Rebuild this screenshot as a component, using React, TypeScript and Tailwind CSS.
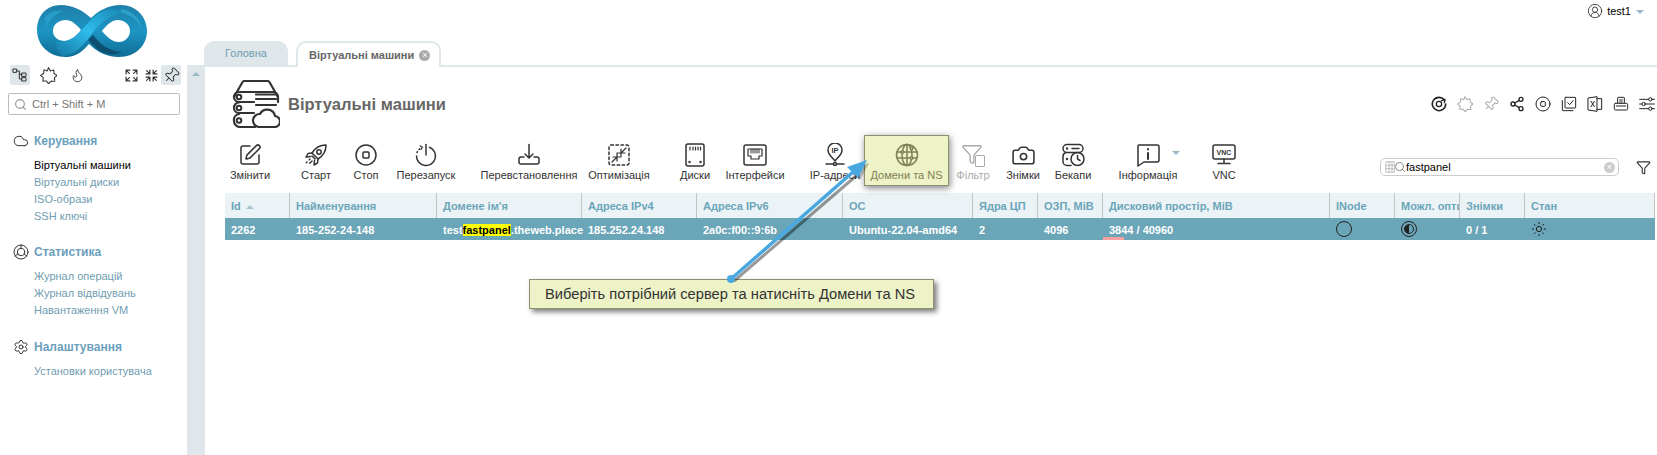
import React from 'react';
import {
  Camera,
  CircleUserRound,
  Cloud,
  Flame,
  Funnel,
  Pin,
  Search,
  Settings,
  Share2,
  SquarePen,
  Sun,
} from 'lucide-react';

const Svg: React.FC<{ className?: string; vb?: string; children: React.ReactNode }> = ({ className = 'w-6 h-6', vb = '0 0 24 24', children }) => (
  <svg viewBox={vb} className={className} fill="none" stroke="currentColor" strokeWidth={1.5} strokeLinecap="round" strokeLinejoin="round">
    {children}
  </svg>
);

const StarBadge: React.FC<{ className?: string }> = ({ className }) => (
  <Svg className={className}>
    <path d="M12 1l2.800 4.500 4.700-1.500.3 5 4.200 3-3.800 3.200.8 5-5-.2L12 23.500 8.900 19.700l-5 .3.8-5L1 12l4.200-3 .3-5 4.700 1.500z" strokeDasharray="2.400 1.300" strokeWidth={1.600} />
  </Svg>
);

const Logo = () => (
  <svg viewBox="0 0 111 52" className="w-[111px] h-[52px]" fill="none">
    <defs>
      <linearGradient id="lg" x1="0" y1="0" x2="0" y2="1">
        <stop offset="0" stopColor="#1f7fa8" />
        <stop offset="0.5" stopColor="#1d95c4" />
        <stop offset="1" stopColor="#0f6c94" />
      </linearGradient>
      <linearGradient id="band" x1="0" y1="1" x2="1" y2="0">
        <stop offset="0" stopColor="#1479a3" />
        <stop offset="0.5" stopColor="#2fbcec" />
        <stop offset="1" stopColor="#1a8ab6" />
      </linearGradient>
    </defs>
    <path
      fillRule="evenodd"
      fill="url(#lg)"
      d="M55 13C46 5 36 0 25 0C10 0 1 11 1 25C1 40 13 52 30 52C40 52 47 46 53 39C60 46 70 52 83 52C100 52 111 40 111 26C111 12 100 0 85 0C72 0 62 6 55 13ZM17 26C17 19 23 15 30 15C35 15 40 19 45 25C40 31 35 36 29 36C22 36 17 32 17 26ZM94 26C94 19 88 15 82 15C75 15 70 21 66 26C71 32 76 37 83 37C89 37 94 32 94 26Z"
    />
    <path d="M57 30C63 38 72 46 85 47C78 51 68 50 60 43C57 40 54 37 52 35Z" fill="#0d4f70" />
    <path d="M8 14C12 7 20 5 28 6C22 8 14 12 11 22C10 18 9 16 8 14Z" fill="#2aa5d4" opacity=".7" />
    <path d="M85 4C95 5 104 13 106 24C102 15 94 9 85 8Z" fill="#36b4e0" opacity=".6" />
    <path d="M26 51C36 51 44 44 52 34C59 24 68 12 86 8C82 3 72 3 63 8C55 13 47 24 41 30C36 34 28 38 20 36C20 42 22 48 26 51Z" fill="url(#band)" />
  </svg>
);

const toolbar = [
  { label: 'Змінити', cls: 'w-[50px]', icon: <SquarePen className="w-[24px] h-[24px]" strokeWidth={1.5} /> },
  {
    label: 'Старт',
    cls: 'w-[50px] ml-[16px]',
    icon: (
      <Svg>
        <path d="M22 2c-6 0-11 3-14 8l6 6c5-3 8-8 8-14z" />
        <circle cx="15" cy="9" r="2.200" />
        <path d="M8 10l-4 .5-2 3.500 4.500-.5M14 16l-.5 4-3.500 2 .5-4.500M8 13l3 3" />
        <path d="M6 16l-1 1M8 18l-3 3M3 19l-1 1" strokeDasharray="1 1.200" />
      </Svg>
    ),
  },
  {
    label: 'Стоп',
    cls: 'w-[40px] ml-[5px]',
    icon: (
      <Svg>
        <circle cx="12" cy="12" r="10" />
        <rect x="9" y="9" width="6" height="6" rx="1" />
      </Svg>
    ),
  },
  {
    label: 'Перезапуск',
    cls: 'w-[64px] ml-[8px]',
    icon: (
      <Svg>
        <path d="M12 1.500v10.500" />
        <path d="M15.500 4.200A9.500 9.500 0 1 1 2.500 13" />
        <path d="M3 9.500l.4-.9M5 6.500l.7-.7" />
        <path d="M6 2.800l2.500 1.400L7 6.500" strokeWidth={1.2} />
      </Svg>
    ),
  },
  {
    label: 'Перевстановлення',
    cls: 'w-[100px] ml-[21px]',
    icon: (
      <Svg>
        <path d="M12 1.500v13M8 11l4 4 4-4" />
        <path d="M7 14H4a2 2 0 0 0-2 2v3a2 2 0 0 0 2 2h16a2 2 0 0 0 2-2v-3a2 2 0 0 0-2-2h-3" />
      </Svg>
    ),
  },
  {
    label: 'Оптимізація',
    cls: 'w-[68px] ml-[6px]',
    icon: (
      <Svg>
        <rect x="2" y="2" width="20" height="20" rx="2" strokeDasharray="2.500 2.500" />
        <path d="M19 5l-4 4M14 6v4h4M5 19l4-4M10 18v-4H6" strokeWidth={1.2} />
        <rect x="10" y="10" width="4" height="4" strokeWidth={1.2} />
      </Svg>
    ),
  },
  {
    label: 'Диски',
    cls: 'w-[40px] ml-[22px]',
    icon: (
      <Svg>
        <rect x="3" y="1" width="18" height="22" rx="2" />
        <path d="M7 4v3M10 4v3M12.500 4v3M15 4v3M17.500 4v3" strokeWidth={1.2} />
        <circle cx="6.500" cy="19" r=".5" />
        <circle cx="17.500" cy="19" r=".5" />
      </Svg>
    ),
  },
  {
    label: 'Інтерфейси',
    cls: 'w-[64px] ml-[8px]',
    icon: (
      <Svg>
        <rect x="1" y="2" width="22" height="20" rx="2" />
        <path d="M5 6h14v7h-3v3H8v-3H5z" strokeWidth={1.2} />
        <path d="M8 6v4M10 6v4M12 6v4M14 6v4M16 6v4" strokeWidth={1} />
      </Svg>
    ),
  },
  {
    label: 'IP-адреси',
    cls: 'w-[56px] ml-[20px]',
    icon: (
      <Svg>
        <path d="M12 18c-3-4-7-6-7-11a7 7 0 0 1 14 0c0 5-4 7-7 11z" />
        <circle cx="12" cy="21" r="1.500" />
        <path d="M3 21h7M14 21h7" />
        <text x="12" y="10" fontSize="7.500" fontWeight="700" fill="currentColor" stroke="none" textAnchor="middle" fontFamily="Liberation Sans">IP</text>
      </Svg>
    ),
  },
];

const toolbarRight = [
  {
    label: 'Знімки',
    cls: 'w-[44px] ml-[8px]',
    icon: <Camera className="w-[25px] h-[25px]" strokeWidth={1.5} />,
  },
  {
    label: 'Бекапи',
    cls: 'w-[44px] ml-[6px]',
    icon: (
      <Svg>
        <rect x="2" y="1.500" width="20" height="8" rx="4" />
        <path d="M5 9.500a4 4 0 0 0-3 4v5a4 4 0 0 0 4 4h4" />
        <circle cx="6" cy="5.500" r=".5" />
        <path d="M11 5.500h7" />
        <circle cx="6" cy="16" r=".5" />
        <circle cx="16.500" cy="16" r="6.500" />
        <path d="M16.500 12.500V16l2.500 1.500" />
      </Svg>
    ),
  },
];

const columns = [
  { label: 'Id', cls: 'w-[65px]', sort: true },
  { label: 'Найменування', cls: 'w-[147px]' },
  { label: "Домене ім'я", cls: 'w-[145px]' },
  { label: 'Адреса IPv4', cls: 'w-[115px]' },
  { label: 'Адреса IPv6', cls: 'w-[146px]' },
  { label: 'ОС', cls: 'w-[130px]' },
  { label: 'Ядра ЦП', cls: 'w-[65px]' },
  { label: 'ОЗП, МіВ', cls: 'w-[65px]' },
  { label: 'Дисковий простір, МіВ', cls: 'w-[227px]' },
  { label: 'INode', cls: 'w-[65px]' },
  { label: 'Можл. оптимізації', cls: 'w-[65px]' },
  { label: 'Знімки', cls: 'w-[65px]' },
  { label: 'Стан', cls: 'w-[130px]' },
];

const topIcons = [
  <Svg key="a" className="w-4 h-4 text-[#222]">
    <path d="M20 6a10 10 0 1 0 2 6" strokeWidth={2.400} />
    <circle cx="12" cy="12" r="4" strokeWidth={2} />
    <path d="M16 7l5-2-1 5" strokeWidth={2} />
  </Svg>,
  <StarBadge key="b" className="w-4 h-4 text-[#aaa]" />,
  <Pin key="c" className="w-4 h-4 text-[#aaa] rotate-45" strokeWidth={1.5} />,
  <Share2 key="d" className="w-4 h-4 text-[#222]" strokeWidth={2} />,
  <Svg key="e" className="w-4 h-4 text-[#222]">
    <circle cx="12" cy="12" r="10.500" />
    <rect x="8.500" y="8.500" width="7" height="7" rx="1.500" />
  </Svg>,
  <Svg key="f" className="w-4 h-4 text-[#222]">
    <rect x="6" y="2" width="16" height="16" rx="1" />
    <path d="M10 10l3 3 5-6" />
    <path d="M2 7v14a1 1 0 0 0 1 1h15" />
  </Svg>,
  <Svg key="g" className="w-4 h-4 text-[#222]">
    <path d="M2 3l13-2v22L2 21z" />
    <path d="M15 4h7v16h-7M6 8l5 8M11 8l-5 8" />
  </Svg>,
  <Svg key="h" className="w-4 h-4 text-[#222]">
    <path d="M7 10V3a1 1 0 0 1 1-1h8a1 1 0 0 1 1 1v7" />
    <path d="M10 6h4M10 9h4" />
    <rect x="2" y="11" width="20" height="10" rx="2" />
    <path d="M5 15h14" />
  </Svg>,
  <Svg key="i" className="w-4 h-4 text-[#222]">
    <path d="M1 5h13M20 5h3M1 12h3M10 12h13M1 19h13M20 19h3" />
    <circle cx="17" cy="5" r="2.500" />
    <circle cx="7" cy="12" r="2.500" />
    <circle cx="17" cy="19" r="2.500" />
  </Svg>,
];

const ToolButton: React.FC<{ label: string; cls: string; icon: React.ReactNode }> = ({ label, cls, icon }) => (
  <div className={`flex flex-col items-center pt-[8px] text-[#333] ${cls}`}>
    <div className="h-[24px] flex items-center justify-center">{icon}</div>
    <span className="mt-[1px] text-[11px] leading-[14px] whitespace-nowrap">{label}</span>
  </div>
);

const NavGroup: React.FC<{ title: string; icon: React.ReactNode; items: string[]; active?: string; cls: string }> = ({ title, icon, items, active, cls }) => (
  <div className={cls}>
    <div className="flex items-center h-[20px] pl-[13px]">
      <span className="w-[21px] text-[#333]">{icon}</span>
      <span className="text-[12px] font-bold text-[#6ba0bd]">{title}</span>
    </div>
    <ul className="mt-[6px] pl-[34px]">
      {items.map((item) => (
        <li key={item} className={`h-[17px] text-[11px] leading-[17px] ${item === active ? 'text-black' : 'text-[#6f9cb0]'}`}>
          {item}
        </li>
      ))}
    </ul>
  </div>
);

export default function App() {
  return (
    <div className="relative h-[455px] w-[1657px] overflow-hidden bg-white flex font-['Liberation_Sans',sans-serif]">
      {/* Sidebar */}
      <aside className="w-[187px] shrink-0">
        <div className="h-[65px] pl-[36px] pt-[5px]">
          <Logo />
        </div>
        <div className="flex items-center h-[20px] pl-[10px] text-[#333]">
          <div className="w-[20px] h-[20px] rounded-[2px] bg-[#dfe7ea] flex items-center justify-center">
            <Svg className="w-[16px] h-[16px]">
              <rect x="2" y="3" width="5" height="5" />
              <rect x="15" y="9" width="6" height="5" />
              <rect x="15" y="16" width="6" height="5" />
              <path d="M7 6h4v12h4M11 11h4" />
            </Svg>
          </div>
          <StarBadge className="ml-[10px] w-[17px] h-[17px]" />
          <Flame className="ml-[13px] w-[15px] h-[19px]" strokeWidth={1.4} />
          <Svg className="ml-[40px] w-[13px] h-[13px]">
            <path d="M2 9V2h7M2 2l6 6M22 9V2h-7M22 2l-6 6M2 15v7h7M2 22l6-6M22 15v7h-7M22 22l-6-6" strokeWidth={2.200} />
          </Svg>
          <Svg className="ml-[7px] w-[13px] h-[13px]">
            <path d="M9 2v7H2M9 9L3 3M15 2v7h7M15 9l6-6M9 22v-7H2M9 15l-6 6M15 22v-7h7M15 15l6 6" strokeWidth={2.200} />
          </Svg>
          <div className="ml-[3px] w-[20px] h-[20px] rounded-[2px] bg-[#dfe7ea] flex items-center justify-center">
            <Pin className="w-[17px] h-[17px] rotate-45" strokeWidth={1.4} />
          </div>
        </div>
        <div className="mt-[8px] ml-[8px] w-[172px] h-[22px] border border-[#bbb] rounded-[2px] flex items-center pl-[5px]">
          <Search className="w-[13px] h-[13px] text-[#999]" strokeWidth={2.200} />
          <span className="ml-[5px] text-[11px] text-[#777]">Ctrl + Shift + M</span>
        </div>
        <NavGroup
          cls="mt-[16px]"
          title="Керування"
          icon={<Cloud className="w-[16px] h-[16px]" strokeWidth={1.5} />}
          items={['Віртуальні машини', 'Віртуальні диски', 'ISO-образи', 'SSH ключі']}
          active="Віртуальні машини"
        />
        <NavGroup
          cls="mt-[17px]"
          title="Статистика"
          icon={
            <Svg className="w-[16px] h-[16px]">
              <circle cx="12" cy="12" r="10.500" />
              <circle cx="12" cy="12" r="5.500" />
              <path d="M12 1.500v5M3 18l4.500-3M21 18l-4.500-3" />
            </Svg>
          }
          items={['Журнал операцій', 'Журнал відвідувань', 'Навантаження VM']}
        />
        <NavGroup
          cls="mt-[18px]"
          title="Налаштування"
          icon={<Settings className="w-[16px] h-[16px]" strokeWidth={1.5} />}
          items={['Установки користувача']}
        />
      </aside>

      <div className="flex-1 min-w-0 flex flex-col">
        {/* User */}
        <div className="h-[41px] flex justify-end items-start pt-[3px] pr-[13px]">
          <CircleUserRound className="w-[16px] h-[16px] text-[#333]" strokeWidth={1.3} />
          <span className="ml-[4px] text-[11px] leading-[16px] text-black">test1</span>
          <span className="ml-[5px] mt-[7px] w-0 h-0 border-x-[4px] border-x-transparent border-t-[4px] border-t-[#9db8c6]" />
        </div>
        {/* Tabs */}
        <div className="h-[24px] pl-[17px] flex items-end gap-[8px]">
          <div className="w-[84px] h-[24px] pt-[1px] rounded-t-[10px] bg-[#dfe7ea] flex items-center justify-center text-[11px] text-[#6f9cb0]">Головна</div>
          <div className="w-[145px] h-[26px] -mb-[2px] rounded-t-[10px] border-x-2 border-t-2 border-[#dfe7ea] bg-white flex items-center pl-[11px] text-[11px] font-bold text-[#666] whitespace-nowrap relative z-10">
            Віртуальні машини
            <span className="ml-[5px] w-[11px] h-[11px] rounded-full bg-[#aaa] text-white text-[9px] leading-[11px] text-center font-normal">×</span>
          </div>
        </div>
        <div className="flex">
          <div className="w-[18px] h-[390px] bg-[#dfe7ea] shrink-0 flex justify-center pt-[7px]">
            <span className="w-0 h-0 border-x-[4px] border-x-transparent border-b-[4px] border-b-[#9db8c6]" />
          </div>
          <main className="flex-1 min-w-0 border-t-2 border-[#dfe7ea] pl-[20px] pr-[2px] pt-[13px]">
            {/* Title row */}
            <div className="h-[48px] flex items-center pl-[7px]">
              <Svg vb="0 0 48 48" className="w-[48px] h-[48px] text-[#333]">
                <path d="M2 17L10 3a3 3 0 0 1 3-2h22a3 3 0 0 1 3 2l8 14" strokeWidth={2.200} />
                <path d="M22 22H7a5 5 0 0 1-5-5 5 5 0 0 1 5-5h34a5 5 0 0 1 5 5v5" strokeWidth={2.200} />
                <path d="M7 22.500a5 5 0 0 0-5 5.500 5 5 0 0 0 5 5h15" strokeWidth={2.200} />
                <path d="M7 34a6 6 0 0 0-5 6.500A6 6 0 0 0 8 47h15" strokeWidth={2.200} />
                <circle cx="7" cy="17" r="2.300" strokeWidth={2} />
                <circle cx="7" cy="28" r="2.300" strokeWidth={2} />
                <circle cx="7" cy="40.500" r="2.300" strokeWidth={2} />
                <path d="M24 14.500h20M24 19h20M24 25h20" strokeWidth={2.200} />
                <path d="M27 47h15a5.500 5.500 0 0 0 1-11 8 8 0 0 0-15-2 6.500 6.500 0 0 0-1 13z" strokeWidth={2.200} fill="white" />
              </Svg>
              <h1 className="ml-[8px] text-[16.500px] font-bold text-[#666]">Віртуальні машини</h1>
              <div className="ml-auto flex items-center gap-[10px]">{topIcons}</div>
            </div>
            {/* Toolbar */}
            <div className="mt-[7px] h-[51px] flex items-start">
              {toolbar.map((b) => (
                <ToolButton key={b.label} {...b} />
              ))}
              <div className="ml-[1px] w-[85px] h-[51px] bg-[#edf2c7] border border-[#8f8f70] shadow-[1px_2px_7px_rgba(0,0,0,.5)] flex flex-col items-center pt-[7px] text-[#7f7f58] relative z-10">
                <Svg className="w-[24px] h-[24px]">
                  <circle cx="12" cy="12" r="10.500" />
                  <ellipse cx="12" cy="12" rx="5" ry="10.500" />
                  <path d="M2 9h20M2 15h20M12 1.500v21" />
                  <circle cx="7.500" cy="9" r="1.300" fill="#edf2c7" />
                  <circle cx="16.500" cy="5.500" r="1.300" fill="#edf2c7" />
                  <circle cx="16.500" cy="15" r="1.300" fill="#edf2c7" />
                </Svg>
                <span className="mt-[1px] text-[11px] leading-[14px] whitespace-nowrap">Домени та NS</span>
              </div>
              <div className="ml-[4px] w-[40px] flex flex-col items-center pt-[8px] text-[#aaa]">
                <div className="relative h-[24px] w-[24px]">
                  <Funnel className="w-[22px] h-[22px]" strokeWidth={1.5} />
                  <span className="absolute right-[0px] bottom-[0px] w-[10px] h-[12px] bg-white border-[1.500px] border-[#aaa] rounded-[1px]" />
                </div>
                <span className="mt-[1px] text-[11px] leading-[14px]">Фільтр</span>
              </div>
              {toolbarRight.map((b) => (
                <ToolButton key={b.label} {...b} />
              ))}
              <div className="ml-[18px] w-[70px] relative flex flex-col items-center pt-[8px] text-[#333]">
                <Svg className="w-[24px] h-[24px]">
                  <path d="M3 2h18a2 2 0 0 1 2 2v13a2 2 0 0 1-2 2H8l-6 4V3a1 1 0 0 1 1-1z" />
                  <path d="M12 6v.5M12 10v6" strokeWidth={2} />
                </Svg>
                <span className="mt-[1px] text-[11px] leading-[14px] whitespace-nowrap">Інформація</span>
                <span className="absolute left-[59px] top-[16px] w-0 h-0 border-x-[4px] border-x-transparent border-t-[4px] border-t-[#9db8c6]" />
              </div>
              <div className="ml-[21px] w-[40px] flex flex-col items-center pt-[8px] text-[#333]">
                <Svg className="w-[24px] h-[24px]">
                  <rect x="1" y="2" width="22" height="14" rx="2" />
                  <path d="M12 16v4M6 20.500h12" />
                  <text x="12" y="12" fontSize="7" fontWeight="700" fill="currentColor" stroke="none" textAnchor="middle" fontFamily="Liberation Sans">VNC</text>
                </Svg>
                <span className="mt-[1px] text-[11px] leading-[14px]">VNC</span>
              </div>
              <div className="ml-[136px] mt-[23px] w-[239px] h-[18px] border border-[#ccc] rounded-[5px] flex items-center pl-[4px] pr-[3px]">
                <Svg className="w-[14px] h-[14px] text-[#999]">
                  <path d="M2 3h14v18H2zM2 9h14M2 15h14M7 3v18M12 3v18" strokeWidth={1} />
                </Svg>
                <Search className="w-[12px] h-[12px] text-[#888] -ml-[5px]" strokeWidth={2} />
                <span className="text-[11px] text-black flex-1">fastpanel</span>
                <span className="w-[11px] h-[11px] rounded-full bg-[#ccc] text-white text-[9px] leading-[11px] text-center">×</span>
              </div>
              <Funnel className="ml-[17px] mt-[25px] w-[15px] h-[15px] text-[#333]" strokeWidth={1.800} />
            </div>
            {/* Table */}
            <div className="mt-[7px]">
              <div className="flex h-[25px] bg-[#ecf3f6]">
                {columns.map((c) => (
                  <div key={c.label} className={`${c.cls} shrink-0 overflow-hidden whitespace-nowrap border-r border-[#c4c4c4] pl-[6px] pt-[2px] text-[11px] leading-[23px] font-bold text-[#6aa5b9] flex items-center`}>
                    {c.label}
                    {c.sort && <span className="ml-[5px] w-0 h-0 border-x-[4px] border-x-transparent border-b-[4px] border-b-[#a9c4d0]" />}
                  </div>
                ))}
              </div>
              <div className="flex h-[22px] bg-[#6aa5b8] text-[11px] leading-[24px] font-bold text-white">
                <div className="w-[65px] shrink-0 pl-[6px]">2262</div>
                <div className="w-[147px] shrink-0 pl-[6px]">185-252-24-148</div>
                <div className="w-[145px] shrink-0 pl-[6px] whitespace-nowrap">
                  test<span className="bg-[#ffff00] text-black">fastpanel</span>.theweb.place
                </div>
                <div className="w-[115px] shrink-0 pl-[6px]">185.252.24.148</div>
                <div className="w-[146px] shrink-0 pl-[6px]">2a0c:f00::9:6b</div>
                <div className="w-[130px] shrink-0 pl-[6px] whitespace-nowrap">Ubuntu-22.04-amd64</div>
                <div className="w-[65px] shrink-0 pl-[6px]">2</div>
                <div className="w-[65px] shrink-0 pl-[6px]">4096</div>
                <div className="w-[227px] shrink-0 relative pl-[6px]">
                  3844 / 40960
                  <span className="absolute left-0 bottom-0 w-[21px] h-[3px] bg-[#f4a0a0]" />
                </div>
                <div className="w-[65px] shrink-0 pl-[6px] flex items-center">
                  <span className="w-[16px] h-[16px] rounded-full border border-[#222]" />
                </div>
                <div className="w-[65px] shrink-0 pl-[6px] flex items-center">
                  <span className="w-[16px] h-[16px] rounded-full border border-[#222] flex items-center justify-center">
                    <span className="w-[10px] h-[10px] rounded-full bg-[linear-gradient(90deg,#222_50%,transparent_50%)] border border-[#222]" />
                  </span>
                </div>
                <div className="w-[65px] shrink-0 pl-[6px]">0 / 1</div>
                <div className="w-[130px] shrink-0 pl-[6px] flex items-center text-[#222]">
                  <Sun className="w-[16px] h-[16px]" strokeWidth={1.500} />
                </div>
              </div>
            </div>
          </main>
        </div>
      </div>

      {/* Callout with arrow */}
      <svg className="absolute left-0 top-0 w-[1657px] h-[455px] pointer-events-none z-20" viewBox="0 0 1657 455" fill="none">
        <path d="M734 281L856 176" stroke="#000" strokeOpacity=".4" strokeWidth={3} />
        <path d="M849 169L860 180L869 163Z" fill="#000" fillOpacity=".25" />
        <path d="M731 279L853 172" stroke="#4aa8e0" strokeWidth={3.500} />
        <path d="M867 160L847 167L858 178Z" fill="#4aa8e0" />
        <circle cx="731" cy="279" r="4" fill="#4aa8e0" />
      </svg>
      <div className="absolute left-[529px] top-[279px] w-[405px] h-[30px] z-10 bg-[#edf2c7] border border-[#8f8f70] shadow-[3px_3px_5px_rgba(0,0,0,.5)] pl-[15px] text-[14.700px] leading-[28px] text-[#333] whitespace-nowrap">
        Виберіть потрібний сервер та натисніть Домени та NS
      </div>
    </div>
  );
}
